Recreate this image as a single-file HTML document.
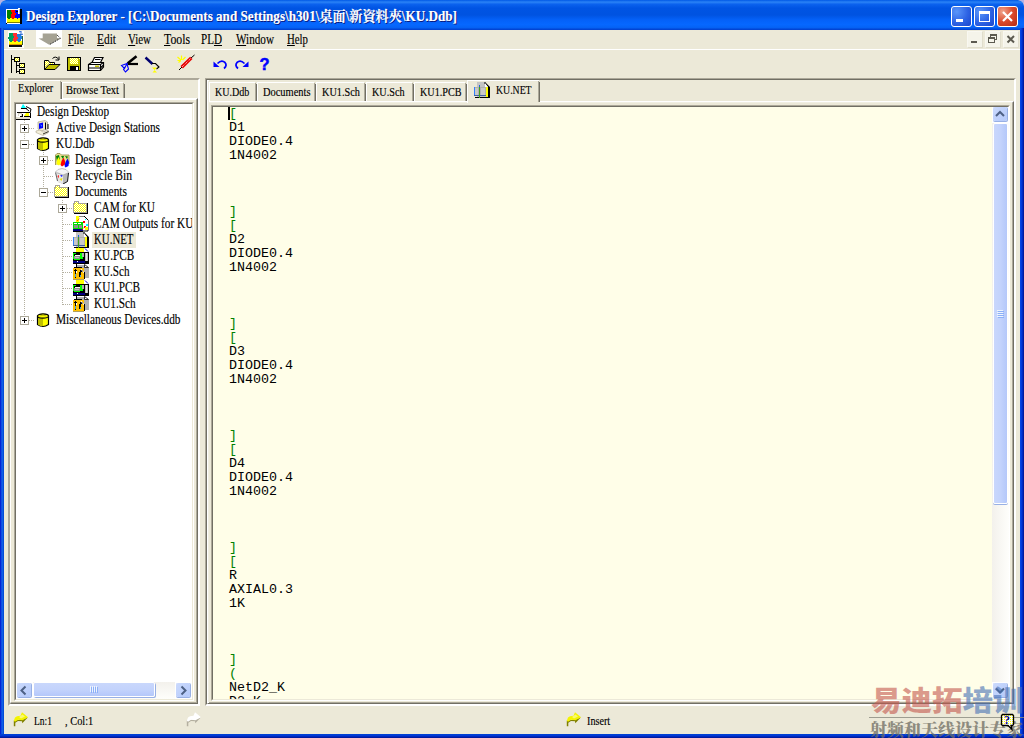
<!DOCTYPE html>
<html>
<head>
<meta charset="utf-8">
<title>Design Explorer</title>
<style>
html,body{margin:0;padding:0;}
body{width:1024px;height:738px;overflow:hidden;position:relative;background:#ECE9D8;font-family:"Liberation Serif","Noto Serif CJK SC",serif;font-size:13px;color:#000;}
.abs{position:absolute;}
.tx{white-space:nowrap;transform-origin:0 50%;-webkit-text-stroke:0.15px currentColor;}
#win{position:absolute;left:0;top:0;width:1024px;height:738px;background:#ECE9D8;overflow:hidden;}
#bl{left:0;top:28px;width:4px;height:710px;background:linear-gradient(90deg,#0019CF 0,#0831D9 25%,#166AEE 50%,#0855DD 75%,#0144D0 100%);}
#br{left:1020px;top:28px;width:4px;height:710px;background:linear-gradient(90deg,#0A4AE8 0,#0038D8 45%,#0024B4 75%,#00138C 100%);}
#bb{left:0;top:734px;width:1024px;height:4px;background:linear-gradient(180deg,#0144D0 0,#0038D8 40%,#0020B0 75%,#001590 100%);}
#title{left:0;top:0;width:1024px;height:30px;border-radius:6px 6px 0 0;background:linear-gradient(180deg,#0058E6 0,#2B83F6 7%,#0B62EE 14%,#0054E3 27%,#0053E1 50%,#0461F8 66%,#0668FF 82%,#0562F4 92%,#0248D8 97%,#0140CC 100%);}
.tb{top:6px;width:21px;height:21px;border-radius:3px;box-sizing:border-box;border:1px solid #fff;background:radial-gradient(circle at 25% 25%,#5a96fa 0,#2d63e4 55%,#1a45cc 100%);}
.tbx{background:radial-gradient(circle at 25% 25%,#f0a48c 0,#da4a2c 50%,#b42a12 100%);}
.ed{font-family:"Liberation Mono",monospace;font-size:13.33px;line-height:14px;white-space:pre;color:#000;}
.g{color:#008000;}
.dot-h{height:1px;background-image:linear-gradient(90deg,#B4B0A0 50%,transparent 50%);background-size:2px 1px;}
.dot-v{width:1px;background-image:linear-gradient(180deg,#B4B0A0 50%,transparent 50%);background-size:1px 2px;}
.pm{width:9px;height:9px;box-sizing:border-box;border:1px solid #ACA899;background:#fff;}
.pm i{position:absolute;left:1px;top:3px;width:5px;height:1px;background:#000;}
.pm b{position:absolute;left:3px;top:1px;width:1px;height:5px;background:#000;}
.mdi{top:31px;width:16px;height:17px;box-sizing:border-box;background:#F5F4EA;border:1px solid;border-color:#F9F8F1 #E0DDCC #E0DDCC #F9F8F1;}
</style>
</head>
<body>
<div id="win">
<!-- TITLE -->
<div id="title" class="abs"></div>
<div id="bl" class="abs"></div><div id="br" class="abs"></div><div id="bb" class="abs"></div>
<svg class="abs" style="left:0;top:0" width="8" height="8" viewBox="0 0 8 8"><path d="M0 0 L6 0 A6 6 0 0 0 0 6 Z" fill="#B4B0E4"/></svg>
<svg class="abs" style="left:1016px;top:0" width="8" height="8" viewBox="0 0 8 8"><path d="M8 0 L2 0 A6 6 0 0 1 8 6 Z" fill="#B4B0E4"/></svg>
<svg class="abs" style="left:6px;top:8px" width="16" height="16" viewBox="0 0 16 16" shape-rendering="crispEdges">
<rect x="0" y="1" width="15" height="14" fill="#fff"/>
<rect x="1" y="2" width="4" height="9" fill="#008000"/><rect x="5" y="4" width="1" height="2" fill="#008000"/><rect x="2" y="10" width="2" height="2" fill="#008000"/>
<rect x="5" y="2" width="4" height="9" fill="#FF0000"/><rect x="5" y="4" width="1" height="2" fill="#008000"/><rect x="9" y="5" width="1" height="2" fill="#FF0000"/><rect x="6" y="10" width="2" height="2" fill="#FF0000"/>
<rect x="9" y="2" width="5" height="9" fill="#0000FF"/><rect x="9" y="5" width="1" height="2" fill="#FF0000"/><rect x="11" y="10" width="1" height="2" fill="#0000FF"/>
<rect x="1" y="11" width="13" height="3" fill="#FFFF00"/><rect x="1" y="10" width="1" height="1" fill="#FFFF00"/><rect x="4" y="10" width="2" height="1" fill="#FFFF00"/><rect x="8" y="10" width="3" height="1" fill="#FFFF00"/><rect x="12" y="10" width="2" height="1" fill="#FFFF00"/>
<rect x="1" y="14" width="13" height="1" fill="#808000"/>
<rect x="14" y="1" width="2" height="15" fill="#000"/><rect x="0" y="15" width="16" height="1" fill="#000"/><rect x="1" y="15" width="13" height="1" fill="#fff"/>
<rect x="12" y="0" width="2" height="6" fill="#fff"/><rect x="13" y="1" width="1" height="5" fill="#C0C0C0"/><rect x="10" y="3" width="2" height="1" fill="#000"/>
</svg>
<div class="abs tx" style="left:26.00px;top:8.00px;font-size:13.75px;line-height:18px;height:18px;transform:scaleX(0.9557);font-weight:bold;color:#fff;text-shadow:1px 1px 0 #0A1A80;">Design Explorer - [C:\Documents and Settings\h301\桌面\新資料夾\KU.Ddb]</div>
<div class="abs tb" style="left:951px"><div class="abs" style="left:4px;top:12px;width:7px;height:3px;background:#fff"></div></div>
<div class="abs tb" style="left:974px"><div class="abs" style="left:4px;top:4px;width:11px;height:11px;box-sizing:border-box;border:1px solid #fff;border-top-width:3px"></div></div>
<div class="abs tb tbx" style="left:997px"><svg class="abs" style="left:0;top:0" width="19" height="19" viewBox="0 0 19 19"><path d="M5 5 L14 14 M14 5 L5 14" stroke="#fff" stroke-width="2.2" fill="none"/></svg></div>
<!-- MENU -->
<div class="abs" style="left:4px;top:49px;width:1016px;height:1px;background:#fff"></div>
<svg class="abs" style="left:8px;top:31px" width="16" height="17" viewBox="0 0 16 17" shape-rendering="crispEdges">
<rect x="0" y="0" width="16" height="17" fill="#fff"/>
<rect x="1" y="2" width="4" height="9" fill="#00A060"/><rect x="5" y="5" width="1" height="2" fill="#00A060"/><rect x="0" y="6" width="1" height="2" fill="#00A060"/>
<rect x="5" y="2" width="4" height="10" fill="#FF3030"/><rect x="5" y="5" width="1" height="2" fill="#00A060"/><rect x="9" y="6" width="1" height="2" fill="#FF3030"/>
<rect x="9" y="3" width="4" height="8" fill="#2080E0"/><rect x="9" y="6" width="1" height="2" fill="#FF3030"/><rect x="13" y="5" width="2" height="3" fill="#2080E0"/>
<rect x="1" y="11" width="13" height="3" fill="#FFFF00"/><rect x="1" y="10" width="1" height="1" fill="#FFFF00"/><rect x="4" y="10" width="2" height="1" fill="#FFFF00"/><rect x="8" y="10" width="2" height="1" fill="#FFFF00"/><rect x="12" y="10" width="2" height="1" fill="#FFFF00"/>
<rect x="1" y="13" width="13" height="1" fill="#E0A000"/><rect x="1" y="14" width="13" height="2" fill="#101010"/><rect x="14" y="5" width="1" height="9" fill="#306030"/>
<path d="M11 1 L13 0 L13 4 L15 3" fill="none" stroke="#2060D0" stroke-width="1" shape-rendering="geometricPrecision"/>
</svg>
<div class="abs" style="left:36px;top:30px;width:26px;height:17px;background:#fff"></div>
<svg class="abs" style="left:36px;top:30px" width="26" height="17" viewBox="0 0 26 17"><path d="M6.700 3.500 L21 3.500 L21 8 L24.500 8.300 L13.200 14.800 L2.600 8.600 L6.700 8.300 Z" fill="#A5A294"/><path d="M21 5 L24.500 8.300 L13.200 14.800" stroke="#000" stroke-width="1" stroke-dasharray="1 1" fill="none"/></svg>
<div class="abs tx" style="left:68.00px;top:32.00px;font-size:13.75px;line-height:16px;height:16px;transform:scaleX(0.7474);"><u>F</u>ile</div>
<div class="abs tx" style="left:97.00px;top:32.00px;font-size:13.75px;line-height:16px;height:16px;transform:scaleX(0.8289);"><u>E</u>dit</div>
<div class="abs tx" style="left:128.00px;top:32.00px;font-size:13.75px;line-height:16px;height:16px;transform:scaleX(0.7940);"><u>V</u>iew</div>
<div class="abs tx" style="left:164.00px;top:32.00px;font-size:13.75px;line-height:16px;height:16px;transform:scaleX(0.8560);"><u>T</u>ools</div>
<div class="abs tx" style="left:201.00px;top:32.00px;font-size:13.75px;line-height:16px;height:16px;transform:scaleX(0.8082);">PL<u>D</u></div>
<div class="abs tx" style="left:236.00px;top:32.00px;font-size:13.75px;line-height:16px;height:16px;transform:scaleX(0.8117);"><u>W</u>indow</div>
<div class="abs tx" style="left:287.00px;top:32.00px;font-size:13.75px;line-height:16px;height:16px;transform:scaleX(0.7850);"><u>H</u>elp</div>
<div class="abs mdi" style="left:967px"></div><div class="abs mdi" style="left:985px"></div><div class="abs mdi" style="left:1003px"></div>
<div class="abs" style="left:971px;top:41px;width:6px;height:2px;background:#5C5A50"></div>
<svg class="abs" style="left:985px;top:31px" width="16" height="17" viewBox="0 0 16 17" shape-rendering="crispEdges">
<rect x="5.500" y="3.500" width="6" height="5" fill="none" stroke="#5C5A50"/><rect x="5" y="3" width="7" height="2" fill="#5C5A50"/>
<rect x="3.500" y="6.500" width="6" height="5" fill="#F5F4EA" stroke="#5C5A50"/><rect x="3" y="6" width="7" height="2" fill="#5C5A50"/></svg>
<svg class="abs" style="left:1003px;top:31px" width="16" height="17" viewBox="0 0 16 17"><path d="M4.500 5 L11 11.500 M11 5 L4.500 11.500" stroke="#5C5A50" stroke-width="2" fill="none"/></svg>
<!-- TOOLBAR -->
<svg class="abs" style="left:8px;top:52px" width="270" height="24" viewBox="0 0 270 24">
<defs><pattern id="dy" width="2" height="2" patternUnits="userSpaceOnUse"><rect width="2" height="2" fill="#FFFF00"/><rect width="1" height="1" fill="#fff"/><rect x="1" y="1" width="1" height="1" fill="#fff"/></pattern></defs>
<g shape-rendering="crispEdges">
<rect x="3" y="3" width="1" height="18" fill="#000"/><rect x="3" y="7" width="3" height="1" fill="#000"/>
<rect x="8" y="10" width="1" height="11" fill="#000"/><rect x="8" y="13" width="3" height="1" fill="#000"/><rect x="8" y="19" width="3" height="1" fill="#000"/>
<rect x="6" y="5" width="6" height="5" fill="#000"/><rect x="7" y="6" width="4" height="3" fill="url(#dy)"/>
<rect x="11" y="11" width="6" height="5" fill="#000"/><rect x="12" y="12" width="4" height="3" fill="url(#dy)"/>
<rect x="11" y="17" width="6" height="5" fill="#000"/><rect x="12" y="18" width="4" height="3" fill="url(#dy)"/>
</g>
<g>
<path d="M36.500 17.500 L36.500 8.500 L40.500 8.500 L41.500 10.500 L46.500 10.500 L46.500 12.500" fill="url(#dy)" stroke="#000"/>
<path d="M36.500 17.500 L41 12.500 L52 12.500 L47 17.500 Z" fill="#C0C000" stroke="#000"/>
<path d="M44.500 6.500 Q47.500 3.500 50.500 7 M51 4.500 L51 8 L47.500 8" fill="none" stroke="#000"/>
</g>
<g shape-rendering="crispEdges">
<rect x="59" y="5" width="14" height="14" fill="#000"/><rect x="60" y="6" width="12" height="12" fill="#C0C000"/>
<rect x="62" y="6" width="8" height="6" fill="url(#dy)"/><rect x="62" y="14" width="9" height="4" fill="#000"/><rect x="68" y="15" width="2" height="3" fill="#fff"/><rect x="71" y="6" width="1" height="1" fill="#fff"/>
</g>
<g>
<path d="M84 10.500 L86.500 5.500 L95 5.500 L92.500 10.500 Z" fill="#fff" stroke="#000" stroke-width="1.200"/>
<path d="M87 7.500 L92.500 7.500" stroke="#000" stroke-width="1"/>
<path d="M80.500 12.500 L83.500 10.500 L95.500 10.500 L95.500 15 L92.500 18.500 L80.500 18.500 Z" fill="#fff" stroke="#000" stroke-width="1.200"/>
<path d="M80.500 12.500 L92.500 12.500 L95.500 10.500 M92.500 12.500 L92.500 18.500 M80.500 16 L92.500 16 L95.500 13" fill="none" stroke="#000" stroke-width="1.200"/>
<rect x="87" y="13.500" width="4" height="1.500" fill="#C0C000"/>
</g>
<g>
<path d="M119.500 11.500 L128.500 4.200" stroke="#000" stroke-width="2.600"/>
<path d="M119.500 12 L130 12" stroke="#000" stroke-width="2.200"/>
<path d="M113.500 13.500 L119 11.500 L116.500 16.500 Z M119 12 L120.500 17 L117.500 20 L115.500 17.500 Z" fill="none" stroke="#0000FF" stroke-width="1.100"/>
</g>
<g>
<path d="M137.500 5.500 L144.500 12" stroke="#000070" stroke-width="2.400"/>
<path d="M144 11.500 L147.500 11.500 L151 15 L148.500 17" stroke="#000" stroke-width="1.100" fill="none"/>
<path d="M144 15.500 L149 15.500 L144.500 20.500 L149 20.500 Z" fill="#FFFF00"/>
</g>
<g>
<path d="M171 18 L174 15 M183 6 L186.500 3" stroke="#000" stroke-width="1"/>
<path d="M173.700 15.300 L183.300 5.900" stroke="#E80000" stroke-width="3.400"/>
<path d="M174 15 L183 6.200" stroke="#fff" stroke-width="0.900" stroke-dasharray="1 1"/>
<path d="M169.500 5 L173 8 M173.500 3.500 L173.500 8 M169.500 8.500 L173 8.500 M177.500 5 L174.500 8 M170.500 10.500 L173 8.500" stroke="#FFFF00" stroke-width="1.200"/>
</g>
<g>
<path d="M205.500 9.500 L205.500 15 L211.500 15 Z" fill="#0000FF"/>
<path d="M209.500 11.500 Q213.500 7.500 217 10.500 Q219.500 13.500 216 16.500" fill="none" stroke="#0000FF" stroke-width="1.700"/>
<path d="M240.500 9.500 L240.500 15 L234.500 15 Z" fill="#0000FF"/>
<path d="M236.500 11.500 Q232.500 7.500 229 10.500 Q226.500 13.500 230 16.500" fill="none" stroke="#0000FF" stroke-width="1.700"/>
</g>
<text x="251.500" y="18" font-family="Liberation Sans, sans-serif" font-weight="bold" font-size="16.500" fill="#0000FF" stroke="#0000FF" stroke-width=".5">?</text>
</svg>
<!-- LEFT -->
<div class="abs" style="left:8px;top:78px;width:192px;height:628px;box-sizing:border-box;border:2px solid;border-color:#ACA899 #fff #fff #ACA899"></div>
<div class="abs" style="left:10px;top:98px;width:188px;height:606px;box-sizing:border-box;border:2px solid;border-color:#fff #716F64 #716F64 #fff;border-left-width:1px"></div>
<div class="abs" style="left:196px;top:100px;width:1px;height:602px;background:#ACA899"></div><div class="abs" style="left:11px;top:702px;width:186px;height:1px;background:#ACA899"></div>
<div class="abs" style="left:10px;top:80px;width:50px;height:20px;background:#ECE9D8;border-top:1px solid #fff;border-left:1px solid #fff;box-sizing:border-box"></div>
<div class="abs" style="left:60px;top:81px;width:1px;height:18px;background:#ACA899"></div><div class="abs" style="left:61px;top:82px;width:1px;height:17px;background:#716F64"></div>
<div class="abs" style="left:62px;top:82px;width:61px;height:1px;background:#fff"></div><div class="abs" style="left:62px;top:82px;width:1px;height:16px;background:#fff"></div>
<div class="abs" style="left:123px;top:83px;width:1px;height:15px;background:#ACA899"></div><div class="abs" style="left:124px;top:84px;width:1px;height:14px;background:#716F64"></div>
<div class="abs tx" style="left:18.00px;top:81.00px;font-size:12.25px;line-height:14px;height:14px;transform:scaleX(0.8213);">Explorer</div>
<div class="abs tx" style="left:66.00px;top:83.00px;font-size:12.25px;line-height:14px;height:14px;transform:scaleX(0.8566);">Browse Text</div>
<div class="abs" style="left:14px;top:102px;width:180px;height:599px;box-sizing:border-box;border:1px solid;border-color:#ACA899 #fff #fff #ACA899;background:#fff"></div>
<div class="abs" style="left:15px;top:103px;width:178px;height:597px;box-sizing:border-box;border:1px solid;border-color:#716F64 #ECE9D8 #ECE9D8 #716F64;background:#fff"></div>
<svg width="0" height="0" class="abs"><defs><linearGradient id="bg" x1="0" y1="0" x2="1" y2="1"><stop offset="0" stop-color="#CBDAFD"/><stop offset="1" stop-color="#B4C9FA"/></linearGradient></defs></svg>
<div class="abs" style="left:16px;top:104px;width:176px;height:578px;overflow:hidden">
<div class="abs dot-v" style="left:8px;top:16px;height:201px"></div>
<div class="abs dot-v" style="left:27px;top:48px;height:41px"></div>
<div class="abs dot-v" style="left:46px;top:96px;height:105px"></div>
<svg class="abs" style="left:0px;top:0px" width="16" height="16" viewBox="0 0 16 16"><g shape-rendering="crispEdges"><path d="M7 0 L10 4 L5 4 Z" fill="#00FFFF" shape-rendering="geometricPrecision"/><rect x="5" y="4" width="6" height="1" fill="#000"/><path d="M10 2.500 L15 5 L13.500 11 M10 4.500 L13 7" fill="none" stroke="#000" stroke-width="1" shape-rendering="geometricPrecision"/><rect x="1" y="8" width="13" height="1" fill="#000"/><rect x="14" y="9" width="1" height="5" fill="#000"/><rect x="1" y="9" width="13" height="4" fill="#fff"/><rect x="2" y="9" width="4" height="3" fill="#D8D4C4"/><rect x="3" y="10" width="2" height="2" fill="#fff"/><rect x="4" y="12" width="3" height="1" fill="#000"/><rect x="6" y="10" width="1" height="2" fill="#000"/><path d="M8 12 L10 9 L13 9 L13 12 Z" fill="#FFFF00" shape-rendering="geometricPrecision"/><rect x="8" y="12" width="6" height="1" fill="#000"/><rect x="0" y="13" width="14" height="2" fill="#E4E0D0"/><rect x="0" y="15" width="14" height="1" fill="#000"/></g></svg>
<div class="abs tx" style="left:21.00px;top:0.00px;font-size:13.75px;line-height:16px;height:16px;transform:scaleX(0.8160);">Design Desktop</div>
<div class="abs dot-h" style="left:9px;top:24px;width:9px"></div>
<div class="abs pm" style="left:4px;top:20px"><i></i><b></b></div>
<svg class="abs" style="left:19px;top:16px" width="16" height="16" viewBox="0 0 16 16"><path d="M3 2 L10 0.500 L12.500 2 L12.500 9 L6 11 L3 9 Z" fill="#ECE6CC" stroke="#A8A08C" stroke-width=".7"/><path d="M4 3.500 L8 2.500 L8 8 L4 9 Z" fill="#0000FF"/><path d="M5 4.500 L7 5 L7 7 Z" fill="#4080FF"/><path d="M10.500 2.500 L10.500 9.500 M13 4 L13 9" stroke="#000" stroke-width="1"/><path d="M1 11 L5 10 L8 12 L13 10 L13.500 12.500 L8 15.500 L1 12.500 Z" fill="#F4F0DC" stroke="#B8B098" stroke-width=".7"/><path d="M8 14 L13.500 11.500" stroke="#000" stroke-width=".8"/></svg>
<div class="abs tx" style="left:40.00px;top:16.00px;font-size:13.75px;line-height:16px;height:16px;transform:scaleX(0.8202);">Active Design Stations</div>
<div class="abs dot-h" style="left:9px;top:40px;width:9px"></div>
<div class="abs pm" style="left:4px;top:36px"><i></i></div>
<svg class="abs" style="left:19px;top:32px" width="16" height="16" viewBox="0 0 16 16"><path d="M2.500 4 L2.500 12.500 Q8 16.500 13.500 12.500 L13.500 4 Z" fill="#FFFF00" stroke="#000" stroke-width="1.200"/><path d="M3 5 L3 12.500 Q5 14 7 14.500 L7 6 Z" fill="#C0C000"/><path d="M7 6 L8 7 L7 8 L8 9 L7 10 L8 11 L7 12 L8 13 L7 14" stroke="#C0C000" stroke-width="1" fill="none"/><ellipse cx="8" cy="4" rx="5.500" ry="2.200" fill="#FFFF00" stroke="#000" stroke-width="1.200"/><path d="M4.500 4 Q8 2.500 11.500 4" stroke="#C0C000" fill="none"/></svg>
<div class="abs tx" style="left:40.00px;top:32.00px;font-size:13.75px;line-height:16px;height:16px;transform:scaleX(0.8194);">KU.Ddb</div>
<div class="abs dot-h" style="left:28px;top:56px;width:9px"></div>
<div class="abs pm" style="left:23px;top:52px"><i></i><b></b></div>
<svg class="abs" style="left:38px;top:48px" width="16" height="16" viewBox="0 0 16 16"><path d="M1.500 13 L1.500 3 L3 1.500 L6 1.500 L7.500 3 L15 3 L15 12" fill="#E8E090" stroke="#908840" stroke-width=".8"/><path d="M2 4 L5 3 L6 8 L3 10 Z" fill="#008000"/><path d="M7 4 L10 4 L9 7 Z" fill="#008000"/><path d="M11 4 L14 4.500 L13 7 Z" fill="#008000"/><path d="M3 8 L4.500 5 L6 8 L7 11 L5 13.500 L2.500 12 Z" fill="#FFFF00"/><path d="M7.500 9 L9.500 5.500 L11 9 L11 12.500 L8 14.500 L6.500 13 Z" fill="#FF0000"/><path d="M11.500 10 L13.500 6.500 L15 10 L14.500 14 L11.500 15.500 L10.500 14 Z" fill="#0000FF"/></svg>
<div class="abs tx" style="left:59.00px;top:48.00px;font-size:13.75px;line-height:16px;height:16px;transform:scaleX(0.8347);">Design Team</div>
<div class="abs dot-h" style="left:28px;top:72px;width:9px"></div>
<svg class="abs" style="left:38px;top:64px" width="16" height="16" viewBox="0 0 16 16"><path d="M2 5 L4 14 L9 16 L13.500 13.500 L14.500 5 Z" fill="#B8B8B8"/><path d="M2 5 L4 14 L9 16 L9 7 Z" fill="#E8E8E8"/><path d="M1.500 4 L4 1.500 L8 0.500 L12 1.500 L15 4.500 L9 7 Z" fill="#F4F4F4" stroke="#A0A0A0" stroke-width=".6"/><path d="M14.500 5 L13.500 13.500 L9 16" fill="none" stroke="#000" stroke-width=".9"/><path d="M1.500 4.500 L3.500 13" stroke="#000" stroke-width=".6"/><path d="M3.500 8 L5 7 L4.500 10.500 Z" fill="#FF0000"/><path d="M6 7.500 L8.500 7 L8 9 Z" fill="#0000FF"/><path d="M5.500 11 L8.500 10 L7.500 13 Z" fill="#E8E000"/></svg>
<div class="abs tx" style="left:59.00px;top:64.00px;font-size:13.75px;line-height:16px;height:16px;transform:scaleX(0.8433);">Recycle Bin</div>
<div class="abs dot-h" style="left:28px;top:88px;width:9px"></div>
<div class="abs pm" style="left:23px;top:84px"><i></i></div>
<svg class="abs" style="left:38px;top:80px" width="16" height="16" viewBox="0 0 16 16"><g shape-rendering="crispEdges"><rect x="1" y="2" width="14" height="12" fill="#000"/><rect x="0" y="3" width="14" height="10" fill="#A8A498"/><rect x="1" y="1" width="5" height="3" fill="#A8A498"/><rect x="1" y="4" width="12" height="8" fill="url(#dy)"/><rect x="2" y="2" width="3" height="2" fill="url(#dy)"/><rect x="6" y="1" width="9" height="2" fill="#fff"/><rect x="6" y="3" width="8" height="1" fill="#A8A498"/><rect x="14" y="2" width="1" height="1" fill="#fff"/><rect x="0" y="1" width="1" height="2" fill="#fff"/></g></svg>
<div class="abs tx" style="left:59.00px;top:80.00px;font-size:13.75px;line-height:16px;height:16px;transform:scaleX(0.8301);">Documents</div>
<div class="abs dot-h" style="left:47px;top:104px;width:9px"></div>
<div class="abs pm" style="left:42px;top:100px"><i></i><b></b></div>
<svg class="abs" style="left:57px;top:96px" width="16" height="16" viewBox="0 0 16 16"><g shape-rendering="crispEdges"><rect x="1" y="2" width="14" height="12" fill="#000"/><rect x="0" y="3" width="14" height="10" fill="#A8A498"/><rect x="1" y="1" width="5" height="3" fill="#A8A498"/><rect x="1" y="4" width="12" height="8" fill="url(#dy)"/><rect x="2" y="2" width="3" height="2" fill="url(#dy)"/><rect x="6" y="1" width="9" height="2" fill="#fff"/><rect x="6" y="3" width="8" height="1" fill="#A8A498"/><rect x="14" y="2" width="1" height="1" fill="#fff"/><rect x="0" y="1" width="1" height="2" fill="#fff"/></g></svg>
<div class="abs tx" style="left:78.00px;top:96.00px;font-size:13.75px;line-height:16px;height:16px;transform:scaleX(0.8231);">CAM for KU</div>
<div class="abs dot-h" style="left:47px;top:120px;width:9px"></div>
<svg class="abs" style="left:57px;top:112px" width="16" height="16" viewBox="0 0 16 16"><g shape-rendering="crispEdges"><rect x="3" y="0" width="9" height="15" fill="#fff"/><rect x="3" y="0" width="3" height="6" fill="#FFFF00"/><path d="M6 0 L11 0 L15 4 L15 15 L3 15" fill="none" stroke="#000" stroke-width="1" shape-rendering="geometricPrecision"/><rect x="11" y="4" width="4" height="10" fill="#fff"/><rect x="0" y="6" width="10" height="7" fill="#00E000"/><rect x="1" y="7" width="3" height="1" fill="#fff"/><rect x="5" y="7" width="3" height="1" fill="#fff"/><rect x="1" y="9" width="4" height="3" fill="#909090"/><rect x="6" y="9" width="3" height="3" fill="#909090"/><rect x="0" y="13" width="10" height="2" fill="#000080"/><rect x="0" y="15" width="10" height="1" fill="#000"/><path d="M4 5 L7 2 M9 14 L12 10" stroke="#FF0000" stroke-width="1" stroke-dasharray="1 1" shape-rendering="geometricPrecision"/><rect x="11" y="10" width="2" height="2" fill="#FF0000"/><rect x="10" y="5" width="2" height="2" fill="#FF0000"/><rect x="12" y="3" width="1" height="1" fill="#00FFFF"/><rect x="13" y="8" width="2" height="2" fill="#00FFFF"/><rect x="12" y="11" width="3" height="3" fill="#FFFF00"/></g></svg>
<div class="abs tx" style="left:78.00px;top:112.00px;font-size:13.75px;line-height:16px;height:16px;transform:scaleX(0.8200);">CAM Outputs for KU</div>
<div class="abs dot-h" style="left:47px;top:136px;width:9px"></div>
<svg class="abs" style="left:57px;top:128px" width="16" height="16" viewBox="0 0 16 16"><g shape-rendering="crispEdges"><rect x="3" y="0" width="9" height="15" fill="#C4C4C4"/><path d="M11 0 L16 5 L16 16 L1 16 L1 15 L14 15 L14 5 L10 1 Z" fill="#000" shape-rendering="geometricPrecision"/><path d="M11 1 L11 5 L14 5 Z" fill="#fff" shape-rendering="geometricPrecision"/><rect x="12" y="5" width="2" height="10" fill="#FFFF00"/><rect x="0" y="5" width="12" height="9" fill="#B0B0B0"/><rect x="0" y="5" width="1" height="9" fill="#3080FF"/><rect x="1" y="6" width="3" height="7" fill="#C8C8C8"/><rect x="7" y="6" width="4" height="7" fill="#C8C8C8"/><rect x="0" y="13" width="12" height="1" fill="#4060A0"/><rect x="5" y="3" width="1" height="13" fill="#40A020"/><rect x="5" y="3" width="1" height="2" fill="#2060E0"/></g></svg>
<div class="abs" style="left:76px;top:128px;width:44px;height:16px;background:#ECE9D8"></div>
<div class="abs tx" style="left:78.00px;top:128.00px;font-size:13.75px;line-height:16px;height:16px;transform:scaleX(0.7895);">KU.NET</div>
<div class="abs dot-h" style="left:47px;top:152px;width:9px"></div>
<svg class="abs" style="left:57px;top:144px" width="16" height="16" viewBox="0 0 16 16"><g shape-rendering="crispEdges"><rect x="3" y="0" width="8" height="4" fill="#FFFF00"/><path d="M12 0.500 L15 3.500" stroke="#0000C0" stroke-width="1" shape-rendering="geometricPrecision"/><rect x="0" y="4" width="16" height="12" fill="#000"/><rect x="12" y="5" width="3" height="8" fill="#C0C0C0"/><rect x="13" y="5" width="1" height="8" fill="#E8E8E8"/><rect x="0" y="5" width="1" height="6" fill="#00FF00"/><rect x="0" y="5" width="3" height="1" fill="#00FF00"/><rect x="7" y="5" width="2" height="5" fill="#00FF00"/><rect x="7" y="9" width="3" height="2" fill="#00FF00"/><rect x="1" y="11" width="6" height="1" fill="#00FF00"/><rect x="2" y="7" width="5" height="1" fill="#fff"/><rect x="1" y="8" width="6" height="3" fill="#909090"/><rect x="9" y="5" width="2" height="4" fill="#B0B0B0"/><rect x="2" y="9" width="4" height="1" fill="#C0C0C0"/><rect x="0" y="13" width="12" height="2" fill="#000080"/><rect x="4" y="13" width="1" height="1" fill="#fff"/></g></svg>
<div class="abs tx" style="left:78.00px;top:144.00px;font-size:13.75px;line-height:16px;height:16px;transform:scaleX(0.8175);">KU.PCB</div>
<div class="abs dot-h" style="left:47px;top:168px;width:9px"></div>
<svg class="abs" style="left:57px;top:160px" width="16" height="16" viewBox="0 0 16 16"><g shape-rendering="crispEdges"><rect x="4" y="1" width="12" height="13" fill="#B0B0B0"/><path d="M11 0 L16 4 L16 0 Z" fill="#fff" shape-rendering="geometricPrecision"/><path d="M11.500 0.500 L15.500 3.500 L11.500 3.500 Z" fill="#fff" stroke="#000" stroke-width=".8" shape-rendering="geometricPrecision"/><rect x="3" y="0" width="1" height="4" fill="#000"/><rect x="1" y="3" width="8" height="1" fill="#000"/><rect x="0" y="4" width="11" height="11" fill="#FFC000"/><rect x="2" y="5" width="1" height="9" fill="#000"/><rect x="1" y="6" width="3" height="1" fill="#000"/><rect x="2" y="10" width="1" height="3" fill="#40A0E0"/><rect x="3" y="7" width="1" height="2" fill="#fff"/><rect x="6" y="8" width="2" height="5" fill="#000"/><rect x="7" y="6" width="3" height="2" fill="#000"/><rect x="7" y="11" width="1" height="2" fill="#40A0E0"/><path d="M8 5 L11 9" stroke="#fff" stroke-width="1" shape-rendering="geometricPrecision"/><rect x="11" y="8" width="1" height="7" fill="#000"/><rect x="0" y="15" width="11" height="1" fill="#B0A060"/></g></svg>
<div class="abs tx" style="left:78.00px;top:160.00px;font-size:13.75px;line-height:16px;height:16px;transform:scaleX(0.8080);">KU.Sch</div>
<div class="abs dot-h" style="left:47px;top:184px;width:9px"></div>
<svg class="abs" style="left:57px;top:176px" width="16" height="16" viewBox="0 0 16 16"><g shape-rendering="crispEdges"><rect x="3" y="0" width="8" height="4" fill="#FFFF00"/><path d="M12 0.500 L15 3.500" stroke="#0000C0" stroke-width="1" shape-rendering="geometricPrecision"/><rect x="0" y="4" width="16" height="12" fill="#000"/><rect x="12" y="5" width="3" height="8" fill="#C0C0C0"/><rect x="13" y="5" width="1" height="8" fill="#E8E8E8"/><rect x="0" y="5" width="1" height="6" fill="#00FF00"/><rect x="0" y="5" width="3" height="1" fill="#00FF00"/><rect x="7" y="5" width="2" height="5" fill="#00FF00"/><rect x="7" y="9" width="3" height="2" fill="#00FF00"/><rect x="1" y="11" width="6" height="1" fill="#00FF00"/><rect x="2" y="7" width="5" height="1" fill="#fff"/><rect x="1" y="8" width="6" height="3" fill="#909090"/><rect x="9" y="5" width="2" height="4" fill="#B0B0B0"/><rect x="2" y="9" width="4" height="1" fill="#C0C0C0"/><rect x="0" y="13" width="12" height="2" fill="#000080"/><rect x="4" y="13" width="1" height="1" fill="#fff"/></g></svg>
<div class="abs tx" style="left:78.00px;top:176.00px;font-size:13.75px;line-height:16px;height:16px;transform:scaleX(0.8189);">KU1.PCB</div>
<div class="abs dot-h" style="left:47px;top:200px;width:9px"></div>
<svg class="abs" style="left:57px;top:192px" width="16" height="16" viewBox="0 0 16 16"><g shape-rendering="crispEdges"><rect x="4" y="1" width="12" height="13" fill="#B0B0B0"/><path d="M11 0 L16 4 L16 0 Z" fill="#fff" shape-rendering="geometricPrecision"/><path d="M11.500 0.500 L15.500 3.500 L11.500 3.500 Z" fill="#fff" stroke="#000" stroke-width=".8" shape-rendering="geometricPrecision"/><rect x="3" y="0" width="1" height="4" fill="#000"/><rect x="1" y="3" width="8" height="1" fill="#000"/><rect x="0" y="4" width="11" height="11" fill="#FFC000"/><rect x="2" y="5" width="1" height="9" fill="#000"/><rect x="1" y="6" width="3" height="1" fill="#000"/><rect x="2" y="10" width="1" height="3" fill="#40A0E0"/><rect x="3" y="7" width="1" height="2" fill="#fff"/><rect x="6" y="8" width="2" height="5" fill="#000"/><rect x="7" y="6" width="3" height="2" fill="#000"/><rect x="7" y="11" width="1" height="2" fill="#40A0E0"/><path d="M8 5 L11 9" stroke="#fff" stroke-width="1" shape-rendering="geometricPrecision"/><rect x="11" y="8" width="1" height="7" fill="#000"/><rect x="0" y="15" width="11" height="1" fill="#B0A060"/></g></svg>
<div class="abs tx" style="left:78.00px;top:192.00px;font-size:13.75px;line-height:16px;height:16px;transform:scaleX(0.8207);">KU1.Sch</div>
<div class="abs dot-h" style="left:9px;top:216px;width:9px"></div>
<div class="abs pm" style="left:4px;top:212px"><i></i><b></b></div>
<svg class="abs" style="left:19px;top:208px" width="16" height="16" viewBox="0 0 16 16"><path d="M2.500 4 L2.500 12.500 Q8 16.500 13.500 12.500 L13.500 4 Z" fill="#FFFF00" stroke="#000" stroke-width="1.200"/><path d="M3 5 L3 12.500 Q5 14 7 14.500 L7 6 Z" fill="#C0C000"/><path d="M7 6 L8 7 L7 8 L8 9 L7 10 L8 11 L7 12 L8 13 L7 14" stroke="#C0C000" stroke-width="1" fill="none"/><ellipse cx="8" cy="4" rx="5.500" ry="2.200" fill="#FFFF00" stroke="#000" stroke-width="1.200"/><path d="M4.500 4 Q8 2.500 11.500 4" stroke="#C0C000" fill="none"/></svg>
<div class="abs tx" style="left:40.00px;top:208.00px;font-size:13.75px;line-height:16px;height:16px;transform:scaleX(0.8233);">Miscellaneous Devices.ddb</div>
</div>
<div class="abs" style="left:16px;top:682px;width:176px;height:17px;background:linear-gradient(180deg,#F3F1EC,#FEFEFB)"></div>
<svg class="abs" style="left:16px;top:682px;" width="17" height="17" viewBox="0 0 17 17"><rect x="0" y="0" width="17" height="17" fill="#fff"/><rect x="1" y="1" width="15" height="15" rx="2" fill="#98B0E4"/><rect x="1" y="1" width="14" height="14" rx="2" fill="#fff"/><rect x="1" y="1" width="14" height="14" rx="2" fill="url(#bg)"/><path d="M9.500 4.500 L5.500 8.500 L9.500 12.500" fill="none" stroke="#4D6185" stroke-width="2"/></svg>
<svg class="abs" style="left:175px;top:682px;" width="17" height="17" viewBox="0 0 17 17"><rect x="0" y="0" width="17" height="17" fill="#fff"/><rect x="1" y="1" width="15" height="15" rx="2" fill="#98B0E4"/><rect x="1" y="1" width="14" height="14" rx="2" fill="#fff"/><rect x="1" y="1" width="14" height="14" rx="2" fill="url(#bg)"/><path d="M6.500 4.500 L10.500 8.500 L6.500 12.500" fill="none" stroke="#4D6185" stroke-width="2"/></svg>
<div class="abs" style="left:33px;top:682px;width:122px;height:15px;box-sizing:border-box;border:1px solid #fff;border-radius:2px;background:linear-gradient(180deg,#C9D7FC,#C3D3FC 50%,#B4C8FA);box-shadow:1px 1px 0 #98B0E4"></div>
<div class="abs" style="left:90px;top:686px;width:1px;height:6px;background:#EEF4FE"></div><div class="abs" style="left:91px;top:687px;width:1px;height:6px;background:#8CB0F8"></div>
<div class="abs" style="left:92px;top:686px;width:1px;height:6px;background:#EEF4FE"></div><div class="abs" style="left:93px;top:687px;width:1px;height:6px;background:#8CB0F8"></div>
<div class="abs" style="left:94px;top:686px;width:1px;height:6px;background:#EEF4FE"></div><div class="abs" style="left:95px;top:687px;width:1px;height:6px;background:#8CB0F8"></div>
<div class="abs" style="left:96px;top:686px;width:1px;height:6px;background:#EEF4FE"></div><div class="abs" style="left:97px;top:687px;width:1px;height:6px;background:#8CB0F8"></div>
<!-- RIGHT -->
<div class="abs" style="left:205px;top:78px;width:811px;height:628px;box-sizing:border-box;border:2px solid;border-color:#ACA899 #fff #fff #ACA899"></div>
<div class="abs" style="left:206px;top:79px;width:1px;height:625px;background:#716F64"></div><div class="abs" style="left:206px;top:79px;width:808px;height:1px;background:#716F64"></div>
<div class="abs" style="left:207px;top:101px;width:807px;height:603px;box-sizing:border-box;border:2px solid;border-color:#fff #716F64 #716F64 #fff"></div>
<div class="abs" style="left:1012px;top:103px;width:1px;height:600px;background:#ACA899"></div><div class="abs" style="left:209px;top:702px;width:804px;height:1px;background:#ACA899"></div>
<div class="abs" style="left:207px;top:80px;width:2px;height:623px;background:#fff"></div>
<div class="abs" style="left:208px;top:81px;width:1px;height:621px;background:#F1EFE2"></div><div class="abs" style="left:208px;top:102px;width:804px;height:1px;background:#F1EFE2"></div>
<div class="abs" style="left:210px;top:82px;width:45px;height:1px;background:#fff"></div><div class="abs" style="left:209px;top:82px;width:1px;height:19px;background:#fff"></div>
<div class="abs" style="left:255px;top:83px;width:1px;height:18px;background:#ACA899"></div><div class="abs" style="left:256px;top:84px;width:1px;height:17px;background:#716F64"></div>
<div class="abs tx" style="left:214.70px;top:85.00px;font-size:12.25px;line-height:14px;height:14px;transform:scaleX(0.8194);">KU.Ddb</div>
<div class="abs" style="left:258px;top:82px;width:56px;height:1px;background:#fff"></div><div class="abs" style="left:257px;top:82px;width:1px;height:19px;background:#fff"></div>
<div class="abs" style="left:314px;top:83px;width:1px;height:18px;background:#ACA899"></div><div class="abs" style="left:315px;top:84px;width:1px;height:17px;background:#716F64"></div>
<div class="abs tx" style="left:262.60px;top:85.00px;font-size:12.25px;line-height:14px;height:14px;transform:scaleX(0.8513);">Documents</div>
<div class="abs" style="left:317px;top:82px;width:47px;height:1px;background:#fff"></div><div class="abs" style="left:316px;top:82px;width:1px;height:19px;background:#fff"></div>
<div class="abs" style="left:364px;top:83px;width:1px;height:18px;background:#ACA899"></div><div class="abs" style="left:365px;top:84px;width:1px;height:17px;background:#716F64"></div>
<div class="abs tx" style="left:321.90px;top:85.00px;font-size:12.25px;line-height:14px;height:14px;transform:scaleX(0.8351);">KU1.Sch</div>
<div class="abs" style="left:367px;top:82px;width:45px;height:1px;background:#fff"></div><div class="abs" style="left:366px;top:82px;width:1px;height:19px;background:#fff"></div>
<div class="abs" style="left:412px;top:83px;width:1px;height:18px;background:#ACA899"></div><div class="abs" style="left:413px;top:84px;width:1px;height:17px;background:#716F64"></div>
<div class="abs tx" style="left:372.00px;top:85.00px;font-size:12.25px;line-height:14px;height:14px;transform:scaleX(0.8303);">KU.Sch</div>
<div class="abs" style="left:415px;top:82px;width:50px;height:1px;background:#fff"></div><div class="abs" style="left:414px;top:82px;width:1px;height:19px;background:#fff"></div>
<div class="abs" style="left:465px;top:83px;width:1px;height:18px;background:#ACA899"></div><div class="abs" style="left:466px;top:84px;width:1px;height:17px;background:#716F64"></div>
<div class="abs tx" style="left:419.80px;top:85.00px;font-size:12.25px;line-height:14px;height:14px;transform:scaleX(0.8292);">KU1.PCB</div>
<div class="abs" style="left:467px;top:80px;width:72px;height:23px;background:#ECE9D8;border-top:1px solid #fff;border-left:1px solid #fff;box-sizing:border-box"></div>
<div class="abs" style="left:538px;top:81px;width:1px;height:21px;background:#ACA899"></div><div class="abs" style="left:539px;top:82px;width:1px;height:20px;background:#716F64"></div>
<svg class="abs" style="left:474px;top:82px" width="16" height="16" viewBox="0 0 16 16"><g shape-rendering="crispEdges"><rect x="3" y="0" width="9" height="15" fill="#C4C4C4"/><path d="M11 0 L16 5 L16 16 L1 16 L1 15 L14 15 L14 5 L10 1 Z" fill="#000" shape-rendering="geometricPrecision"/><path d="M11 1 L11 5 L14 5 Z" fill="#fff" shape-rendering="geometricPrecision"/><rect x="12" y="5" width="2" height="10" fill="#FFFF00"/><rect x="0" y="5" width="12" height="9" fill="#B0B0B0"/><rect x="0" y="5" width="1" height="9" fill="#3080FF"/><rect x="1" y="6" width="3" height="7" fill="#C8C8C8"/><rect x="7" y="6" width="4" height="7" fill="#C8C8C8"/><rect x="0" y="13" width="12" height="1" fill="#4060A0"/><rect x="5" y="3" width="1" height="13" fill="#40A020"/><rect x="5" y="3" width="1" height="2" fill="#2060E0"/></g></svg>
<div class="abs tx" style="left:496.00px;top:83.00px;font-size:12.25px;line-height:14px;height:14px;transform:scaleX(0.7986);">KU.NET</div>
<div class="abs" style="left:211px;top:105px;width:799px;height:596px;box-sizing:border-box;border:1px solid;border-color:#ACA899 #fff #fff #ACA899;background:#FFFEE8"></div>
<div class="abs" style="left:212px;top:106px;width:797px;height:594px;box-sizing:border-box;border:1px solid;border-color:#716F64 #ECE9D8 #ECE9D8 #716F64;background:#FFFEE8"></div>
<div class="abs ed" style="left:213px;top:107px;width:779px;height:592px;overflow:hidden"><div class="abs" style="left:16px;top:0px"><span class="g">[</span>
D1
DIODE0.4
1N4002



<span class="g">]</span>
<span class="g">[</span>
D2
DIODE0.4
1N4002



<span class="g">]</span>
<span class="g">[</span>
D3
DIODE0.4
1N4002



<span class="g">]</span>
<span class="g">[</span>
D4
DIODE0.4
1N4002



<span class="g">]</span>
<span class="g">[</span>
R
AXIAL0.3
1K



<span class="g">]</span>
<span class="g">(</span>
NetD2_K
D2-K</div><div class="abs" style="left:15px;top:0px;width:2px;height:13px;background:#000"></div></div>
<div class="abs" style="left:992px;top:107px;width:17px;height:592px;background:linear-gradient(90deg,#F3F1EC,#FEFEFB)"></div>
<svg class="abs" style="left:992px;top:106px;clip-path:inset(1px 0 0 0)" width="17" height="17" viewBox="0 0 17 17"><rect x="0" y="0" width="17" height="17" fill="#fff"/><rect x="1" y="1" width="15" height="15" rx="2" fill="#98B0E4"/><rect x="1" y="1" width="14" height="14" rx="2" fill="#fff"/><rect x="1" y="1" width="14" height="14" rx="2" fill="url(#bg)"/><path d="M4 10 L8 6 L12 10" fill="none" stroke="#4D6185" stroke-width="2"/></svg>
<svg class="abs" style="left:992px;top:682px;" width="17" height="17" viewBox="0 0 17 17"><rect x="0" y="0" width="17" height="17" fill="#fff"/><rect x="1" y="1" width="15" height="15" rx="2" fill="#98B0E4"/><rect x="1" y="1" width="14" height="14" rx="2" fill="#fff"/><rect x="1" y="1" width="14" height="14" rx="2" fill="url(#bg)"/><path d="M4 6.500 L8 10.500 L12 6.500" fill="none" stroke="#4D6185" stroke-width="2"/></svg>
<div class="abs" style="left:993px;top:123px;width:15px;height:381px;box-sizing:border-box;border:1px solid #fff;border-radius:2px;background:linear-gradient(90deg,#C9D7FC,#C3D3FC 50%,#B4C8FA);box-shadow:0 1px 0 #98B0E4"></div>
<div class="abs" style="left:997px;top:310px;width:6px;height:1px;background:#EEF4FE"></div><div class="abs" style="left:998px;top:311px;width:6px;height:1px;background:#8CB0F8"></div>
<div class="abs" style="left:997px;top:312px;width:6px;height:1px;background:#EEF4FE"></div><div class="abs" style="left:998px;top:313px;width:6px;height:1px;background:#8CB0F8"></div>
<div class="abs" style="left:997px;top:314px;width:6px;height:1px;background:#EEF4FE"></div><div class="abs" style="left:998px;top:315px;width:6px;height:1px;background:#8CB0F8"></div>
<div class="abs" style="left:997px;top:316px;width:6px;height:1px;background:#EEF4FE"></div><div class="abs" style="left:998px;top:317px;width:6px;height:1px;background:#8CB0F8"></div>
<!-- STATUS -->
<svg class="abs" style="left:13px;top:712px" width="16" height="15" viewBox="0 0 16 15"><path d="M0.800 8.500 L0.800 14.200 L2.300 14.200 L2.300 10.800 L5 9 L9 9.300 L9.300 11.300 L15 5.300 L9.500 7.500 Z" fill="#808000"/><path d="M0.800 8.800 L2 5.500 L4 4.200 L7.500 3.800 L9 0.200 L15 5.300 L9.500 8.200 L5 7.800 L2 9.800 Z" fill="#F4F400"/><path d="M6 5 L9.500 2.500 L12 4.500 L8 6.500 Z" fill="#fff" opacity=".45"/></svg>
<div class="abs tx" style="left:34.00px;top:714.00px;font-size:12.25px;line-height:14px;height:14px;transform:scaleX(0.7779);">Ln:1</div>
<div class="abs tx" style="left:65.00px;top:714.00px;font-size:12.25px;line-height:14px;height:14px;transform:scaleX(0.8483);">, Col:1</div>
<svg class="abs" style="left:186px;top:712px" width="16" height="15" viewBox="0 0 16 15"><path d="M0.800 8.500 L0.800 14.200 L2.300 14.200 L2.300 10.800 L5 9 L9 9.300 L9.300 11.300 L15 5.300 L9.500 7.500 Z" fill="#B4B0A0"/><path d="M0.800 8.800 L2 5.500 L4 4.200 L7.500 3.800 L9 0.200 L15 5.300 L9.500 8.200 L5 7.800 L2 9.800 Z" fill="#FFFFFF"/><path d="M6 5 L9.500 2.500 L12 4.500 L8 6.500 Z" fill="#fff" opacity=".45"/></svg>
<svg class="abs" style="left:566px;top:712px" width="16" height="15" viewBox="0 0 16 15"><path d="M0.800 8.500 L0.800 14.200 L2.300 14.200 L2.300 10.800 L5 9 L9 9.300 L9.300 11.300 L15 5.300 L9.500 7.500 Z" fill="#808000"/><path d="M0.800 8.800 L2 5.500 L4 4.200 L7.500 3.800 L9 0.200 L15 5.300 L9.500 8.200 L5 7.800 L2 9.800 Z" fill="#F4F400"/><path d="M6 5 L9.500 2.500 L12 4.500 L8 6.500 Z" fill="#fff" opacity=".45"/></svg>
<div class="abs tx" style="left:587.00px;top:714.00px;font-size:12.25px;line-height:14px;height:14px;transform:scaleX(0.8314);">Insert</div>
<div class="abs" style="left:871px;top:684px;font-family:'Liberation Sans','Noto Sans CJK SC',sans-serif;font-weight:900;font-size:28px;line-height:36px;transform:scaleX(1.09);transform-origin:0 0;white-space:nowrap;opacity:.6"><span style="color:#C4584E">易迪拓</span><span style="color:#4670B4">培训</span></div>
<div class="abs" style="left:869px;top:716.5px;width:155px;height:1.5px;background:#8A8A80;opacity:.8"></div>
<div class="abs" style="left:870px;top:720px;font-family:'Liberation Serif','Noto Serif CJK SC',serif;font-weight:900;font-size:17px;line-height:22px;white-space:nowrap;color:#6E6C62;opacity:.75">射频和天线设计专家</div>
<svg class="abs" style="left:1000px;top:713px" width="16" height="18" viewBox="0 0 16 18"><defs><pattern id="hd" width="2" height="2" patternUnits="userSpaceOnUse"><rect width="2" height="2" fill="#fff"/><rect width="1" height="1" fill="#FFFF00"/></pattern></defs><path d="M2.500 1.500 L12.500 1.500 L13.500 2.500 L13.500 11.500 L12.500 12.500 L11 12.500 L11.800 16.200 L8 12.500 L2.500 12.500 L1.500 11.500 L1.500 2.500 Z" fill="url(#hd)" stroke="#000" stroke-width="1.300"/><text x="4" y="11.300" font-family="Liberation Serif, serif" font-weight="bold" font-size="12" fill="#000090">?</text></svg>
</div>
</body>
</html>
